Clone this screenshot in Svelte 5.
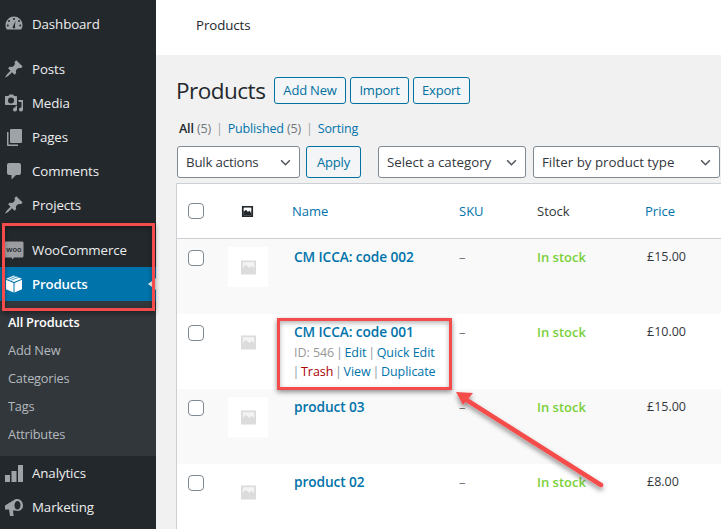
<script>
const rows = [
	{ name: "CM ICCA: code 002", price: "£15.00" },
	{ name: "CM ICCA: code 001", price: "£10.00", actions: true },
	{ name: "product 03", price: "£15.00" },
	{ name: "product 02", price: "£8.00" }
];
const subItems = ["All Products", "Add New", "Categories", "Tags", "Attributes"];
const selects = [
	{ label: "Bulk actions", cls: "bulk" },
	{ label: "Select a category", cls: "cat" },
	{ label: "Filter by product type", cls: "type" }
];
const pin = "M10.44 3.02l1.82-1.82 6.36 6.35-1.83 1.82c-1.05-.68-2.48-.57-3.41.36l-.75.75c-.92.93-1.04 2.35-.35 3.41l-1.83 1.82-2.41-2.41-2.8 2.79c-.42.42-3.38 2.71-3.8 2.29s1.86-3.39 2.28-3.81l2.79-2.79L4.1 9.36l1.83-1.82c1.05.69 2.48.57 3.4-.36l.75-.75c.93-.92 1.05-2.35.36-3.41z";
</script>

{#snippet chevron()}
	<svg class="chev" viewBox="0 0 12 8" width="11" height="7"><path d="M1 1.5l5 5 5-5" fill="none" stroke="#50575e" stroke-width="1.8" /></svg>
{/snippet}

{#snippet placeholder()}
	<div class="thumb">
		<svg viewBox="0 0 16 16" width="15" height="15"><path d="M0 .5h16v15H0z" fill="#dcdcdc" /><path d="M2 2.500h12v6l-3-2.500-2 2.500-4-3.500-3 3.500z" fill="#f4f4f4" /></svg>
	</div>
{/snippet}

<div class="page">
	<nav class="side">
		<a class="item first" href="#a">
			<svg viewBox="0 0 20 20"><path fill-rule="evenodd" d="M10 2.500a8.500 8.500 0 0 0-8.500 8.500c0 1.800.5 3.300 1.400 4.500h14.200c.9-1.200 1.400-2.700 1.400-4.500A8.500 8.500 0 0 0 10 2.500zM10 4a1 1 0 1 1 0 2 1 1 0 0 1 0-2zM5 6a1 1 0 1 1 0 2 1 1 0 0 1 0-2zm10 0a1 1 0 1 1 0 2 1 1 0 0 1 0-2zM3.800 10.500a1 1 0 1 1 0 2 1 1 0 0 1 0-2zm12.400 0a1 1 0 1 1 0 2 1 1 0 0 1 0-2zM11.500 7l-.6 5.300a1.300 1.300 0 1 1-1.900 0z" /></svg>
			<span>Dashboard</span>
		</a>
		<a class="item gap" href="#a"><svg viewBox="0 0 20 20"><path d={pin} /></svg><span>Posts</span></a>
		<a class="item" href="#a">
			<svg viewBox="0 0 20 20"><path d="M13 11V4c0-.6-.4-1-1-1h-1.700L9 1.500H5.500L4.300 3H2c-.6 0-1 .4-1 1v7c0 .6.4 1 1 1h10c.6 0 1-.4 1-1zM7 4.500a3 3 0 1 1 0 6 3 3 0 0 1 0-6zM14 7h5v9.500a2 2 0 1 1-1.500-1.900V9H15zM13 12.500v4a2 2 0 1 1-1.500-1.900V13z" /></svg>
			<span>Media</span>
		</a>
		<a class="item" href="#a">
			<svg viewBox="0 0 20 20"><path d="M7 2h10c.5 0 1 .5 1 1v12c0 .5-.5 1-1 1H7c-.5 0-1-.5-1-1V3c0-.5.5-1 1-1zM3 5h1.500v12.500H14V19H4c-.6 0-1-.4-1-1z" /></svg>
			<span>Pages</span>
		</a>
		<a class="item" href="#a">
			<svg viewBox="0 0 20 20"><path d="M5 2h10c1.100 0 2 .9 2 2v8c0 1.100-.9 2-2 2h-3l-4.500 4.500V14H5c-1.100 0-2-.9-2-2V4c0-1.100.9-2 2-2z" /></svg>
			<span>Comments</span>
		</a>
		<a class="item" href="#a"><svg viewBox="0 0 20 20"><path d={pin} /></svg><span>Projects</span></a>
		<a class="item gap" href="#a">
			<svg class="woo" viewBox="0 0 20 20"><path d="M2 1.500h16c1 0 1.500.6 1.500 1.500v13c0 .9-.5 1.500-1.500 1.500H10l-1.500 2-1-2H2C1 17.500.5 16.900.5 16V3c0-.9.5-1.500 1.500-1.500z" fill="#9b9da0" /><text x="10" y="12" text-anchor="middle">woo</text></svg>
			<span>WooCommerce</span>
		</a>
		<a class="item current" href="#a">
			<svg viewBox="0 0 20 20"><path d="M2 5.800l7.500 3.100v9.600L2 15.300zM18 5.800l-7.500 3.100v9.600l7.500-3.200zM10 1.500l8 3.200-8 3.300-8-3.300z" fill="#fff" /><path d="M4.500 5.300l7.500-3M7 6.300l7.500-3" stroke="#0073aa" stroke-width=".7" /></svg>
			<span>Products</span>
		</a>
		<ul class="sub">
			{#each subItems as s, i}
				<li class:on={i === 0}>{s}</li>
			{/each}
		</ul>
		<a class="item" href="#a">
			<svg viewBox="0 0 20 20"><path d="M1 12h5v7H1zM7.500 8h5v11h-5zM14 2h5v17h-5z" /></svg>
			<span>Analytics</span>
		</a>
		<a class="item" href="#a">
			<svg viewBox="0 0 20 20"><path fill-rule="evenodd" d="M1 8.500l9-5.500c1-.8 2-1 3.500-1 3 0 5.500 3 5.500 6.500S16.500 14 13.500 14c-.8 0-1.500-.2-2.200-.5L9 13.500l.6 5.500H6l-1-6.500H1zM13.500 4c-1.700 0-3 2-3 4.500s1.300 4 3 4 3-1.700 3-4.200S15.200 4 13.500 4z" /></svg>
			<span>Marketing</span>
		</a>
	</nav>

	<main class="main">
		<header class="top">Products</header>
		<div class="body">
			<div class="heading">
				<h1>Products</h1>
				<button class="btn add">Add New</button>
				<button class="btn imp">Import</button>
				<button class="btn">Export</button>
			</div>
			<div class="subsub">
				<b>All</b> <i>(5)</i><em>|</em><a href="#a">Published</a> <i>(5)</i><em>|</em><a href="#a">Sorting</a>
			</div>
			<div class="filters">
				<div class="select {selects[0].cls}">{selects[0].label}{@render chevron()}</div>
				<button class="btn apply">Apply</button>
				<div class="select {selects[1].cls}">{selects[1].label}{@render chevron()}</div>
				<div class="select {selects[2].cls}">{selects[2].label}{@render chevron()}</div>
			</div>
			<div class="table">
				<div class="row head">
					<div><span class="check"></span></div>
					<div class="img-col">
						<svg viewBox="0 0 14 14" width="13" height="13"><path fill-rule="evenodd" d="M1 1h12v12H1zM3 3v8h8V3z" fill="#23282d" /><path d="M3 11V7l2.500-2 2 2.500L9 6l2 3v2z" fill="#23282d" /><path d="M3 3h8v3L9 5 7.500 6.500 5.500 4.500 3 6z" fill="#fff" /></svg>
					</div>
					<div class="lnk hn">Name</div>
					<div class="lnk">SKU</div>
					<div class="dark">Stock</div>
					<div class="lnk">Price</div>
				</div>
				{#each rows as r, i}
					<div class="row prod" class:alt={i % 2 === 0}>
						<div><span class="check"></span></div>
						<div>{@render placeholder()}</div>
						<div class="namecell">
							<a class="title" href="#a">{r.name}</a>
							{#if r.actions}
								<div class="acts"><span class="gr">ID: 546</span> <em>|</em> <a href="#a">Edit</a> <em>|</em> <a href="#a">Quick Edit</a></div>
								<div class="acts"><em>|</em> <a class="trash" href="#a">Trash</a> <em>|</em> <a href="#a">View</a> <em>|</em> <a href="#a">Duplicate</a></div>
							{/if}
						</div>
						<div class="dash">–</div>
						<div class="stock">In stock</div>
						<div class="price">{r.price}</div>
					</div>
				{/each}
			</div>
		</div>
	</main>

	<div class="mark one"></div>
	<div class="mark two"></div>
	<svg class="arrow" viewBox="0 0 721 529" width="721" height="529">
		<defs>
			<filter id="sh" x="-20%" y="-20%" width="140%" height="140%"><feDropShadow dx="0" dy="3" stdDeviation="2.500" flood-color="#000" flood-opacity=".45" /></filter>
		</defs>
		<g filter="url(#sh)">
			<path d="M601 485L465 399" stroke="#f44c4c" stroke-width="4.500" stroke-linecap="round" />
			<path d="M456 392l17 1-10 12z" fill="#f44c4c" />
		</g>
	</svg>
</div>

<style>
	:global(body) {
		margin: 0;
	}

	.page {
		position: relative;
		display: flex;
		width: 721px;
		height: 529px;
		overflow: hidden;
		background: #f1f1f1;
		font-family: "Open Sans", "Liberation Sans", sans-serif;
		font-size: 13px;
		color: #32373c;
	}

	.side {
		flex: 0 0 156px;
		background: #23282d;
		padding-top: 7px;
	}

	.item {
		position: relative;
		display: flex;
		align-items: center;
		gap: 8px;
		height: 34px;
		padding-left: 4px;
		color: #eee;
		text-decoration: none;
		font-size: 13.300px;
		letter-spacing: -0.1px;
	}

	.item svg {
		flex: 0 0 20px;
		width: 20px;
		height: 20px;
		fill: #9ea3a8;
	}

	.item.gap {
		margin-top: 11px;
	}

	.woo text {
		font-size: 7.500px;
		font-weight: 600;
		fill: #23282d;
		letter-spacing: 0;
	}

	.current {
		background: #0073aa;
		color: #fff;
		font-weight: 600;
		letter-spacing: -0.2px;
	}

	.current::after {
		content: "";
		position: absolute;
		right: 0;
		top: 11px;
		border: 6px solid transparent;
		border-right: 8px solid #f1f1f1;
		border-left-width: 0;
	}

	.sub {
		list-style: none;
		margin: 0;
		padding: 7px 0 8px 8px;
		background: #32373c;
		color: #b4b9be;
		font-size: 12.800px;
		letter-spacing: -0.2px;
	}

	.sub li {
		height: 28px;
		line-height: 28px;
	}

	.sub .on {
		color: #fff;
		font-weight: 600;
	}

	.main {
		flex: 1;
		min-width: 0;
	}

	.top {
		height: 55px;
		box-sizing: border-box;
		padding: 16px 0 0 40px;
		background: #fff;
		color: #23282d;
		font-size: 13.300px;
		font-weight: 500;
		letter-spacing: -0.1px;
	}

	.body {
		padding: 21px 0 0 20px;
	}

	.heading {
		display: flex;
		align-items: center;
		height: 28px;
	}

	h1 {
		flex: none;
		width: 88px;
		margin: 0 10px 0 0;
		font-size: 22.500px;
		font-weight: 400;
		color: #23282d;
		letter-spacing: -0.5px;
		white-space: nowrap;
	}

	.btn {
		box-sizing: border-box;
		height: 27px;
		padding: 0 8px;
		margin-right: 4px;
		border: 1px solid #0071a1;
		border-radius: 3px;
		background: #f3f5f6;
		color: #0071a1;
		font: inherit;
		letter-spacing: -0.2px;
		white-space: nowrap;
	}

	.add {
		width: 72px;
	}

	.imp {
		width: 59px;
	}

	.subsub {
		margin: 16px 0 0 3px;
		height: 18px;
		line-height: 18px;
		font-size: 12.500px;
		letter-spacing: -0.15px;
		white-space: nowrap;
	}

	.subsub b {
		font-weight: 600;
		color: #23282d;
	}

	.subsub i {
		font-style: normal;
		color: #72777c;
	}

	.subsub em {
		font-style: normal;
		color: #a0a5aa;
		margin: 0 5px;
	}

	a {
		color: #0073aa;
		text-decoration: none;
	}

	.filters {
		display: flex;
		align-items: center;
		margin-top: 8px;
		margin-left: 1px;
	}

	.select {
		box-sizing: border-box;
		display: flex;
		align-items: center;
		justify-content: space-between;
		flex: none;
		height: 32px;
		padding: 0 8px;
		border: 1px solid #7e8993;
		border-radius: 3px;
		background: #fff;
		color: #32373c;
		font-size: 13.300px;
		white-space: nowrap;
	}

	.bulk {
		width: 123px;
		letter-spacing: -0.2px;
	}

	.cat {
		width: 148px;
		margin-left: 17px;
	}

	.type {
		width: 187px;
		margin-left: 7px;
	}

	.apply {
		height: 32px;
		width: 55px;
		margin: 0 0 0 6px;
		padding: 0;
	}

	.chev {
		flex: none;
	}

	.table {
		box-sizing: border-box;
		width: 600px;
		margin-top: 5px;
		background: #fff;
		border: 1px solid #ccd0d4;
		border-right: 0;
		border-bottom: 0;
	}

	.row {
		display: grid;
		grid-template-columns: 50px 67px 165px 78px 108px 1fr;
		height: 75px;
		box-sizing: border-box;
	}

	.head {
		height: 55px;
		align-items: center;
		border-bottom: 1px solid #ccd0d4;
	}

	.head .check {
		margin-top: 0;
	}

	.img-col {
		padding-left: 14px;
		display: flex;
	}

	.hn {
		margin-left: -2px;
	}

	.lnk {
		color: #0073aa;
	}

	.dark {
		color: #32373c;
	}

	.alt {
		background: #f9f9f9;
	}

	.check {
		display: block;
		box-sizing: border-box;
		width: 16px;
		height: 16px;
		margin: 11px 0 0 11px;
		border: 1px solid #7e8993;
		border-radius: 4px;
		background: #fff;
	}

	.thumb {
		display: flex;
		align-items: center;
		justify-content: center;
		width: 40px;
		height: 40px;
		margin: 8px 0 0 1px;
		background: #fff;
	}

	.namecell {
		padding-top: 8px;
		line-height: 20px;
		font-size: 12.500px;
		letter-spacing: -0.1px;
	}

	.title {
		display: block;
		font-size: 13.700px;
		font-weight: 600;
		letter-spacing: -0.1px;
	}

	.acts {
		white-space: nowrap;
		height: 19px;
		position: relative;
		top: 1px;
		letter-spacing: -0.05px;
	}

	.acts em {
		font-style: normal;
		color: #8c9aa5;
		margin: 0 -1.500px;
	}

	.gr {
		color: #999;
	}

	.trash {
		color: #a00;
	}

	.dash {
		padding-top: 8px;
		line-height: 20px;
		color: #777;
	}

	.stock {
		padding-top: 8px;
		line-height: 20px;
		color: #7ad03a;
		font-weight: 600;
	}

	.price {
		padding: 8px 0 0 2px;
		line-height: 20px;
		font-size: 12.500px;
	}

	.mark {
		position: absolute;
		box-sizing: border-box;
		border: 3px solid #f44c4c;
		box-shadow: 0 2px 5px rgba(0, 0, 0, 0.45), inset 0 2px 5px rgba(0, 0, 0, 0.3);
	}

	.one {
		left: 2px;
		top: 223px;
		width: 153px;
		height: 88px;
	}

	.two {
		left: 277px;
		top: 318px;
		width: 175px;
		height: 72px;
	}

	.arrow {
		position: absolute;
		left: 0;
		top: 0;
		pointer-events: none;
	}
</style>
